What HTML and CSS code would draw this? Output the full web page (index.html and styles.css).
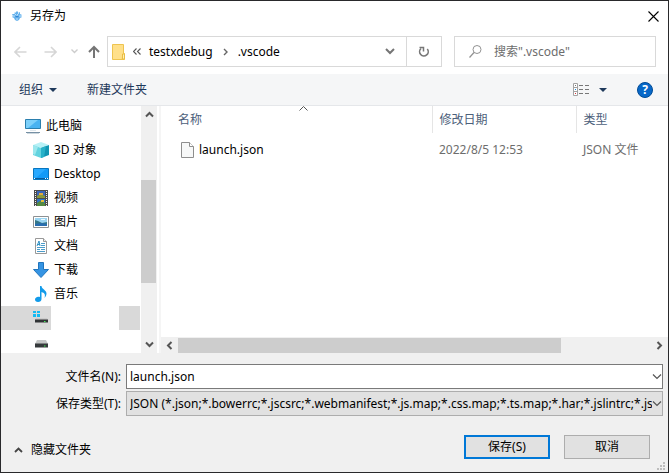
FILE: index.html
```html
<!DOCTYPE html>
<html lang="zh-CN">
<head>
<meta charset="utf-8">
<meta name="viewport" content="width=device-width, initial-scale=1">
<title>另存为</title>
<link rel="stylesheet" href="styles.css">
</head>
<body>
<div class="dialog" role="dialog" aria-labelledby="dialog-title">
  <header class="titlebar">
    <svg class="app-icon" width="12" height="12" viewBox="0 0 12 12" aria-hidden="true"><path d="M5 1l1 1 1-1v2l2-1v2l2 1-1 1 1 1-2 1-1 2-2 1-2-1-1-2-2-1 1-1-1-2 2 0 1-2 1 1z" fill="#64b1ec"/><path d="M3 3l2 2M8 3L6 5M1 6h3M8 6h3M6 5v5" stroke="#bfe1fa" fill="none"/><path d="M4 6h4L6 8z" fill="#2f86d4"/></svg>
    <h1 class="title" id="dialog-title">另存为</h1>
    <button class="icon-button close" type="button" aria-label="关闭"><svg width="11" height="11" viewBox="0 0 11 11"><path d="M.5.5l10 10M10.500.5l-10 10" stroke="#000" stroke-width="1.100" fill="none"/></svg></button>
  </header>

  <div class="navbar">
    <div class="history">
      <button class="icon-button" type="button" aria-label="后退"><svg width="13" height="12" viewBox="0 0 13 12"><path d="M12.500 6H1.500M6 1L1 6l5 5" stroke="#d6d6d6" stroke-width="1.600" fill="none"/></svg></button>
      <button class="icon-button" type="button" aria-label="前进"><svg width="13" height="12" viewBox="0 0 13 12"><path d="M.5 6h11M7 1l5 5-5 5" stroke="#d6d6d6" stroke-width="1.600" fill="none"/></svg></button>
      <button class="icon-button" type="button" aria-label="最近位置"><svg width="7" height="5" viewBox="0 0 7 5"><path d="M.5.5l3 3 3-3" stroke="#ccc" stroke-width="1.400" fill="none"/></svg></button>
      <button class="icon-button" type="button" aria-label="上移"><svg width="12" height="13" viewBox="0 0 12 13"><path d="M6 13V2M1 7l5-5 5 5" stroke="#757575" stroke-width="2" fill="none"/></svg></button>
    </div>
    <nav class="address" aria-label="路径">
      <svg class="folder" width="13" height="16" viewBox="0 0 13 16" aria-hidden="true"><path d="M.5.5h11v9h1v6H.5z" fill="#fbdc75" stroke="#eec450"/><path d="M1 1h10v9l-2 5H1z" fill="#ffe08a"/><path d="M10.500 15V10h2v5z" fill="#fff0b5" stroke="#e9bd43"/></svg>
      <svg class="back-mark" width="8" height="7" viewBox="0 0 8 7" aria-hidden="true"><path d="M3.500.5l-3 3 3 3M7.500.5l-3 3 3 3" stroke="#555" stroke-width="1.100" fill="none"/></svg>
      <a class="crumb" href="#">testxdebug</a>
      <svg class="crumb-sep" width="5" height="8" viewBox="0 0 5 8" aria-hidden="true"><path d="M1 1l3 3-3 3" stroke="#666" stroke-width="1.400" fill="none"/></svg>
      <a class="crumb" href="#">.vscode</a>
      <button class="icon-button drop" type="button" aria-label="以前的位置"><svg width="10" height="7" viewBox="0 0 10 7"><path d="M1 1l4 4 4-4" stroke="#757575" stroke-width="2" fill="none"/></svg></button>
      <button class="icon-button refresh" type="button" aria-label="刷新"><svg width="12" height="12" viewBox="0 0 12 12"><path d="M3 2.500A4.300 4.300 0 1 0 9.300 3" stroke="#777" stroke-width="1.600" fill="none"/><path d="M1.500 1.500h4v4" stroke="#777" stroke-width="1.500" fill="none"/></svg></button>
    </nav>
    <label class="search">
      <svg width="13" height="13" viewBox="0 0 13 13" aria-hidden="true"><circle cx="8" cy="4.500" r="4" stroke="#929292" fill="none"/><path d="M5 7.500L.5 12.500" stroke="#929292" stroke-width="1.200"/></svg>
      <input class="search-input" type="text" aria-label="搜索" placeholder="搜索&quot;.vscode&quot;">
    </label>
  </div>

  <div class="toolbar">
    <button class="tool" type="button">组织<svg width="8" height="4" viewBox="0 0 8 4" aria-hidden="true"><path d="M0 0h8L4 4z" fill="#1e395b"/></svg></button>
    <button class="tool" type="button">新建文件夹</button>
    <div class="tool-end">
      <button class="icon-button view" type="button" aria-label="更改视图"><svg width="16" height="13" viewBox="0 0 16 13"><path d="M.5.5h4v12h-4zM.5 4.500h4M.5 8.500h4" stroke="#a3a3a3" fill="#fff"/><path d="M2 2h1v1H2z" fill="#777"/><path d="M2 6h1v1H2z" fill="#1685da"/><path d="M2 10h1v1H2z" fill="#d33"/><path d="M6 2.500h4M12 2.500h4M6 6.500h4M12 6.500h4M6 10.500h4M12 10.500h4" stroke="#777"/></svg></button>
      <button class="icon-button view-menu" type="button" aria-label="更多选项"><svg width="8" height="4" viewBox="0 0 8 4"><path d="M0 0h8L4 4z" fill="#1e395b"/></svg></button>
      <button class="help" type="button" aria-label="帮助">?</button>
    </div>
  </div>

  <main class="content">
    <nav class="places" aria-label="位置">
      <ul class="tree">
        <li><a class="place root" href="#"><svg width="16" height="16" viewBox="0 0 16 16"><path d="M.5 1.500h15v9H.5z" fill="#49b3f1" stroke="#2b7fae"/><path d="M1 2h12L3 10H1z" fill="#7dd0fa"/><path d="M5 12.500h6" stroke="#dfe8ee"/><path d="M1 14.500h14" stroke="#7690a4"/><path d="M2 15.500h12" stroke="#cdd8df"/></svg>此电脑</a></li>
        <li><a class="place" href="#"><svg width="16" height="16" viewBox="0 0 16 16"><path d="M0 3l8-3 8 3-8 3z" fill="#b8f1f6"/><path d="M0 3l8 3v10l-8-3z" fill="#63d3df"/><path d="M16 3L8 6v10l8-3z" fill="#1196b3"/><path d="M0 3l5 2-3 8-2-1z" fill="#9be7ed"/><path d="M8 6l5-2-2 11-3 1z" fill="#27b1c8"/></svg>3D 对象</a></li>
        <li><a class="place" href="#"><svg width="16" height="16" viewBox="0 0 16 16"><path d="M.5 2.500h15v11H.5z" fill="#129af8" stroke="#0876bf"/><path d="M1 3h12L3 12H1z" fill="#29a9ff"/><path d="M1 12.500h14" stroke="#075b9c"/><path d="M1 12.500h1M12 12.500h1M14 12.500h1" stroke="#fff"/></svg>Desktop</a></li>
        <li><a class="place" href="#"><svg width="16" height="16" viewBox="0 0 16 16"><path d="M1 0h14v16H1z" fill="#4c4c4c"/><path d="M4 1h8v7H4z" fill="#3a66b8"/><path d="M4 9h8v7H4z" fill="#2f74c7"/><path d="M4 6l3-2 5 2v2H4z" fill="#8a9a3b"/><path d="M6 3h4v2H6z" fill="#e1a93b"/><path d="M4 13l3-2 5 2v3H4z" fill="#548a42"/><path d="M8 10h3v2H8z" fill="#e9be38"/><path d="M2.500 1v15M13.500 1v15" stroke="#f4f4f4" stroke-dasharray="1 1"/></svg>视频</a></li>
        <li><a class="place" href="#"><svg width="16" height="16" viewBox="0 0 16 16"><path d="M.5 2.500h15v11H.5z" fill="#fff" stroke="#8d9193"/><path d="M2 4h12v8H2z" fill="#9ad5f2"/><path d="M2 6l3 1 4 2 5-1v4H2z" fill="#347789"/><path d="M2 10l6-1 6 1v2H2z" fill="#286db0"/><path d="M8 5h4v1H8z" fill="#edf9ff"/></svg>图片</a></li>
        <li><a class="place" href="#"><svg width="16" height="16" viewBox="0 0 16 16"><path d="M2.500.5h8l3 3v12h-11z" fill="#fff" stroke="#999"/><path d="M10.500.5v3h3" fill="#eee" stroke="#999"/><path d="M8 5.500h4M8 7.500h4M4 9.500h8M4 11.500h3M8 11.500h4M4 13.500h8" stroke="#4b9cca"/><path d="M4 8l2-5 1 5M4 6.500h3" stroke="#2f91c5" fill="none"/></svg>文档</a></li>
        <li><a class="place" href="#"><svg width="16" height="16" viewBox="0 0 16 16"><path d="M5.500.5h5v7h5L8 15.500.5 7.500h5z" fill="#3594e3" stroke="#2175bd"/></svg>下载</a></li>
        <li><a class="place" href="#"><svg width="16" height="16" viewBox="0 0 16 16"><path d="M7 0h1.500c0 3 5 4 5 7.500 0 2-1 3-2 4.500 1-4 0-5-3-6v7c0 2-1.500 3-3.500 3S2 15 2 13.500 4 10 7 11z" fill="#129bea"/></svg>音乐</a></li>
        <li class="selected"><a class="place" href="#" aria-label="系统磁盘"><svg width="16" height="16" viewBox="0 0 16 16"><path d="M0 1h3v2H0zM4 1h3v2H4zM0 4h3v3H0zM4 4h3v3H4z" fill="#13baf2"/><path d="M3 8h11l1 2H2z" fill="#cbcbcb"/><path d="M2 9.500h13v3H2z" fill="#303335"/><path d="M11 11h1.500v1H11z" fill="#40ee54"/></svg><span class="blank-name"></span></a></li>
        <li><a class="place" href="#" aria-label="本地磁盘"><svg width="16" height="16" viewBox="0 0 16 16"><path d="M4 6h9l2 4H2z" fill="#c4c6c6"/><path d="M2 9.500h13v4H2z" fill="#363a3c"/><path d="M11 11.500h1.500v1H11z" fill="#40ee54"/></svg></a></li>
      </ul>
      <div class="scroll-y" aria-hidden="true">
        <svg width="9" height="17" viewBox="0 0 9 17"><path d="M1 10.500L4.500 7 8 10.500" stroke="#555" stroke-width="2" fill="none"/></svg>
        <div class="track-y"><div class="thumb-y"></div></div>
        <svg width="9" height="17" viewBox="0 0 9 17"><path d="M1 6.500L4.500 10 8 6.500" stroke="#555" stroke-width="2" fill="none"/></svg>
      </div>
    </nav>

    <section class="files" aria-label="文件">
      <table class="file-table">
        <colgroup><col><col class="col-date"><col class="col-type"></colgroup>
        <thead>
          <tr>
            <th scope="col" aria-sort="ascending">名称<svg class="sort" width="9" height="5" viewBox="0 0 9 5" aria-hidden="true"><path d="M.5 4.500l4-4 4 4" stroke="#555" fill="none"/></svg></th>
            <th scope="col">修改日期</th>
            <th scope="col">类型</th>
          </tr>
        </thead>
        <tbody>
          <tr>
            <td><span class="file"><svg width="13" height="16" viewBox="0 0 13 16" aria-hidden="true"><path d="M.5.5h8l4 4v11H.5z" fill="#f7f8f8" stroke="#8e8e8e"/><path d="M8.500.5v4h4" fill="#fff" stroke="#8e8e8e"/></svg>launch.json</span></td>
            <td>2022/8/5 12:53</td>
            <td>JSON 文件</td>
          </tr>
        </tbody>
      </table>
      <div class="scroll-x" aria-hidden="true">
        <svg width="17" height="9" viewBox="0 0 17 9"><path d="M10.500 1L7 4.500 10.500 8" stroke="#555" stroke-width="2" fill="none"/></svg>
        <div class="track-x"><div class="thumb-x"></div></div>
        <svg width="17" height="9" viewBox="0 0 17 9"><path d="M6.500 1L10 4.500 6.500 8" stroke="#555" stroke-width="2" fill="none"/></svg>
      </div>
    </section>
  </main>

  <form class="footer">
    <div class="fields">
      <label for="file-name">文件名(N):</label>
      <div class="field name-field">
        <input id="file-name" class="control" type="text" value="launch.json">
        <svg class="chevron" width="10" height="6" viewBox="0 0 10 6" aria-hidden="true"><path d="M1 .5l4 4 4-4" stroke="#555" stroke-width="1.200" fill="none"/></svg>
      </div>
      <label for="file-type">保存类型(T):</label>
      <div class="field type-field">
        <select id="file-type" class="control">
          <option>JSON (*.json;*.bowerrc;*.jscsrc;*.webmanifest;*.js.map;*.css.map;*.ts.map;*.har;*.jslintrc;*.js</option>
        </select>
        <svg class="chevron" width="10" height="6" viewBox="0 0 10 6" aria-hidden="true"><path d="M1 .5l4 4 4-4" stroke="#555" stroke-width="1.200" fill="none"/></svg>
      </div>
    </div>
    <div class="actions">
      <button class="hide-folders" type="button"><svg width="9" height="6" viewBox="0 0 9 6" aria-hidden="true"><path d="M1 5l3.500-3.500L8 5" stroke="#444" stroke-width="1.800" fill="none"/></svg>隐藏文件夹</button>
      <button class="push primary" type="button">保存(S)</button>
      <button class="push" type="button">取消</button>
    </div>
    <svg class="grip" width="8" height="8" viewBox="0 0 8 8" aria-hidden="true"><path d="M6 0h2v2H6zM3 3h2v2H3zM6 3h2v2H6zM0 6h2v2H0zM3 6h2v2H3zM6 6h2v2H6z" fill="#bdbdbd"/></svg>
  </form>
</div>
</body>
</html>
```
FILE: styles.css
```css
* {
  box-sizing: border-box;
}

body {
  margin: 0;
}

body,
button,
input,
select {
  font-family: "Noto Sans", "Noto Sans CJK SC", sans-serif;
  font-size: 12px;
  line-height: 16px;
  color: #000;
}

button {
  padding: 0;
  border: 0;
  background: none;
}

a {
  color: inherit;
  text-decoration: none;
}

svg {
  display: block;
  flex: none;
}

.dialog {
  display: flex;
  flex-direction: column;
  height: 100vh;
  border: 1px solid #29292b;
  background: #fff;
}

.icon-button {
  display: flex;
  align-items: center;
  justify-content: center;
}

/* Title bar */
.titlebar {
  display: flex;
  align-items: center;
  height: 30px;
  padding: 0 9px 0 10px;
}

.title {
  flex: 1;
  margin: 0 0 0 7px;
  font-size: 12px;
  font-weight: 400;
}

/* Navigation */
.navbar {
  display: grid;
  grid-template-columns: auto 335fr 214fr;
  align-items: center;
  height: 43px;
  padding: 0 12px 2px 4px;
}

.history {
  display: grid;
  grid-template-columns: 30px 30px 18px 22px;
  align-items: center;
  margin-right: 2px;
}

.address {
  display: flex;
  align-items: center;
  height: 31px;
  padding-left: 4px;
  border: 1px solid #d9d9d9;
}

.back-mark {
  margin: 0 8px;
}

.crumb-sep {
  margin: 0 10px;
}

.drop {
  width: 32px;
  height: 100%;
  margin-left: auto;
}

.refresh {
  width: 35px;
  height: 100%;
  border-left: 1px solid #d9d9d9;
}

.search {
  display: flex;
  align-items: center;
  gap: 12px;
  min-width: 0;
  height: 31px;
  margin-left: 12px;
  padding-left: 14px;
  border: 1px solid #d9d9d9;
}

.search-input {
  flex: 1;
  min-width: 0;
  padding: 0;
  border: 0;
  outline: 0;
  background: none;
}

.search-input::placeholder {
  color: #6d6d6d;
  opacity: 1;
}

/* Command bar */
.toolbar {
  display: flex;
  align-items: center;
  gap: 30px;
  height: 32px;
  padding: 0 15px 0 18px;
  border-bottom: 1px solid #e5e7ea;
  background: #f5f6f7;
}

.tool {
  display: flex;
  align-items: center;
  gap: 6px;
  color: #1e395b;
}

.tool-end {
  display: flex;
  align-items: center;
  margin-left: auto;
}

.view-menu {
  margin: 0 30px 0 10px;
}

.help {
  width: 16px;
  height: 16px;
  border: 1px solid #004b96;
  border-radius: 50%;
  background: #0868c8;
  color: #fff;
  font-weight: 700;
  line-height: 14px;
  text-align: center;
}

/* Places tree */
.content {
  display: flex;
  flex: 1;
  min-height: 0;
}

.places {
  display: flex;
  width: 156px;
}

.tree {
  flex: 1;
  margin: 0;
  padding: 8px 0 0;
  overflow: hidden;
  list-style: none;
}

.place {
  display: flex;
  align-items: center;
  gap: 5px;
  height: 24px;
  padding-left: 32px;
}

.root {
  padding-left: 24px;
}

.selected {
  margin-right: 1px;
  background: #d9d9d9;
}

.blank-name {
  flex: 1;
  align-self: stretch;
  margin: 0 21px 0 -3px;
  background: #fff;
}

.scroll-y {
  display: flex;
  flex-direction: column;
  align-items: center;
  width: 16px;
  background: #f0f0f0;
}

.track-y {
  flex: 1;
  width: 100%;
  padding-top: 57px;
}

.thumb-y {
  width: 15px;
  height: 103px;
  background: #cdcdcd;
}

/* File list */
.files {
  display: flex;
  flex: 1;
  flex-direction: column;
  justify-content: space-between;
  min-width: 0;
  margin-left: 2px;
  border-left: 2px solid #f5f5f5;
}

.file-table {
  width: 100%;
  border-collapse: collapse;
  table-layout: fixed;
}

.col-date {
  width: 144px;
}

.col-type {
  width: 92px;
}

.file-table th,
.file-table td {
  padding: 0 0 0 7px;
  text-align: left;
  color: #6d6d6d;
}

.file-table th {
  position: relative;
  height: 27px;
  border-left: 1px solid #e5e5e5;
  font-weight: 400;
  color: #4c607a;
}

.file-table th:first-child {
  padding-left: 17px;
  border-left: 0;
}

.file-table td {
  height: 34px;
}

.file-table td:first-child {
  padding-left: 20px;
  color: #000;
}

.sort {
  position: absolute;
  top: 0;
  left: 51%;
}

.file {
  display: flex;
  align-items: center;
  gap: 5px;
}

.scroll-x {
  display: flex;
  align-items: center;
  height: 16px;
  background: #f0f0f0;
}

.track-x {
  flex: 1;
}

.thumb-x {
  width: 81%;
  height: 15px;
  background: #cdcdcd;
}

/* Footer */
.footer {
  position: relative;
  padding: 11px 5px 13px 13px;
  background: #f0f0f0;
}

.fields {
  display: grid;
  grid-template-columns: 107px 1fr;
  align-items: center;
  gap: 2px 5px;
}

.fields label {
  text-align: right;
}

.field {
  position: relative;
  height: 25px;
  border: 1px solid #7a7a7a;
  background: #fff;
}

.type-field {
  border-color: #adadad;
  background: #e1e1e1;
}

.control {
  display: block;
  width: 100%;
  height: 100%;
  padding: 0 10px 0 3px;
  border: 0;
  outline: 0;
  background: none;
  appearance: none;
}

.chevron {
  position: absolute;
  top: 9px;
  right: 0;
  pointer-events: none;
}

.actions {
  display: flex;
  align-items: center;
  gap: 14px;
  margin-top: 19px;
  padding-right: 13px;
}

.hide-folders {
  display: flex;
  align-items: center;
  gap: 8px;
  margin-right: auto;
  padding-top: 6px;
}

.push {
  width: 86px;
  height: 24px;
  border: 1px solid #adadad;
  background: #e1e1e1;
}

.primary {
  border: 2px solid #0078d7;
}

.grip {
  position: absolute;
  right: 3px;
  bottom: 2px;
}
```
